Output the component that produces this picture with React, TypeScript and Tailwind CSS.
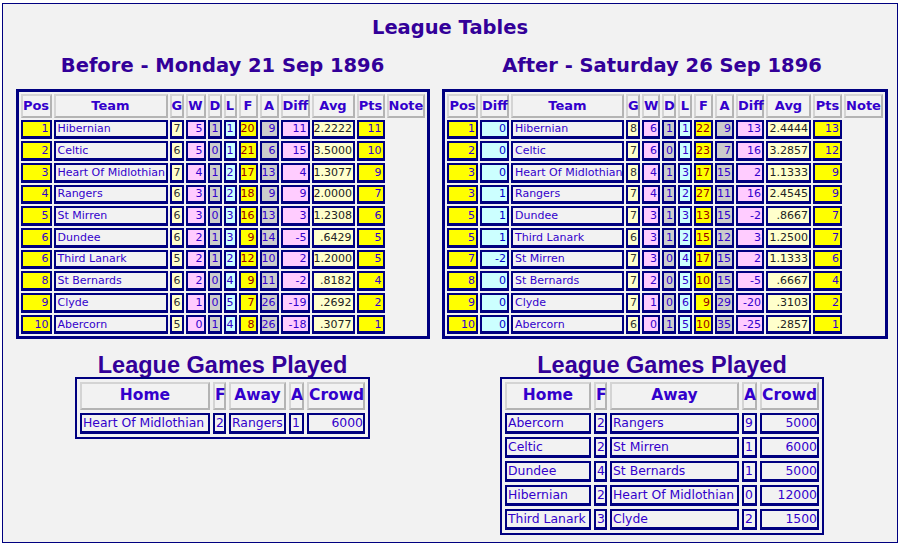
type Col = {
  key: string
  label: string
  w: string
  cell: string
}

const head =
  'h-[20px] p-0 border-2 border-[#d4d4d4] border-r-[#b4b4b4] border-b-[#b4b4b4] text-center text-[13px] font-bold text-[#3300cc]'
const box = 'border-2 border-b-[3px] border-[#000080] h-[19.7px] leading-[13px] whitespace-nowrap'
const num = 'text-right pl-0 pr-[1px]'

const beforeCols: Col[] = [
  { key: 'pos', label: 'Pos', w: 'w-[31px]', cell: `bg-[#ffff00] text-[#3300cc] ${num}` },
  { key: 'team', label: 'Team', w: 'w-[114px]', cell: 'bg-[#f2f2f2] text-[#3300cc] text-left px-[2px]' },
  { key: 'g', label: 'G', w: 'w-[14px]', cell: `bg-[#ffffcc] text-[#333333] ${num}` },
  { key: 'w', label: 'W', w: 'w-[20px]', cell: `bg-[#ffccff] text-[#3300cc] ${num}` },
  { key: 'd', label: 'D', w: 'w-[14px]', cell: `bg-[#cccccc] text-[#3300cc] ${num}` },
  { key: 'l', label: 'L', w: 'w-[13px]', cell: `bg-[#ccffff] text-[#3300cc] ${num}` },
  { key: 'f', label: 'F', w: 'w-[19px]', cell: `bg-[#ffff00] text-[#990000] ${num}` },
  { key: 'a', label: 'A', w: 'w-[19px]', cell: `bg-[#cccccc] text-[#3300cc] ${num}` },
  { key: 'diff', label: 'Diff', w: 'w-[29px]', cell: `bg-[#ffccff] text-[#3300cc] ${num}` },
  { key: 'avg', label: 'Avg', w: 'w-[43px]', cell: `bg-[#ffffcc] text-[#222222] ${num}` },
  { key: 'pts', label: 'Pts', w: 'w-[28px]', cell: `bg-[#ffff00] text-[#3300cc] ${num}` },
  { key: 'note', label: 'Note', w: 'w-[38px]', cell: '' },
]

const afterCols: Col[] = [
  { key: 'pos', label: 'Pos', w: 'w-[31px]', cell: `bg-[#ffff00] text-[#3300cc] ${num}` },
  { key: 'move', label: 'Diff', w: 'w-[29px]', cell: `bg-[#ccffff] text-[#0000cc] ${num}` },
  { key: 'team', label: 'Team', w: 'w-[113px]', cell: 'bg-[#f2f2f2] text-[#3300cc] text-left px-[2px]' },
  { key: 'g', label: 'G', w: 'w-[14px]', cell: `bg-[#ffffcc] text-[#333333] ${num}` },
  { key: 'w', label: 'W', w: 'w-[18px]', cell: `bg-[#ffccff] text-[#3300cc] ${num}` },
  { key: 'd', label: 'D', w: 'w-[14px]', cell: `bg-[#cccccc] text-[#3300cc] ${num}` },
  { key: 'l', label: 'L', w: 'w-[14px]', cell: `bg-[#ccffff] text-[#3300cc] ${num}` },
  { key: 'f', label: 'F', w: 'w-[19px]', cell: `bg-[#ffff00] text-[#990000] ${num}` },
  { key: 'a', label: 'A', w: 'w-[19px]', cell: `bg-[#cccccc] text-[#3300cc] ${num}` },
  { key: 'diff', label: 'Diff', w: 'w-[28px]', cell: `bg-[#ffccff] text-[#3300cc] ${num}` },
  { key: 'avg', label: 'Avg', w: 'w-[45px]', cell: `bg-[#ffffcc] text-[#222222] ${num}` },
  { key: 'pts', label: 'Pts', w: 'w-[29px]', cell: `bg-[#ffff00] text-[#3300cc] ${num}` },
  { key: 'note', label: 'Note', w: 'w-[39px]', cell: '' },
]

const toRow = (s: string, keys: string[]) => {
  const parts = s.split('|')
  const r: Record<string, string> = {}
  keys.forEach((k, i) => (r[k] = parts[i] ?? ''))
  return r
}

const beforeKeys = ['pos', 'team', 'g', 'w', 'd', 'l', 'f', 'a', 'diff', 'avg', 'pts']
const afterKeys = ['pos', 'move', 'team', 'g', 'w', 'd', 'l', 'f', 'a', 'diff', 'avg', 'pts']

const before = [
  '1|Hibernian|7|5|1|1|20|9|11|2.2222|11',
  '2|Celtic|6|5|0|1|21|6|15|3.5000|10',
  '3|Heart Of Midlothian|7|4|1|2|17|13|4|1.3077|9',
  '4|Rangers|6|3|1|2|18|9|9|2.0000|7',
  '5|St Mirren|6|3|0|3|16|13|3|1.2308|6',
  '6|Dundee|6|2|1|3|9|14|-5|.6429|5',
  '6|Third Lanark|5|2|1|2|12|10|2|1.2000|5',
  '8|St Bernards|6|2|0|4|9|11|-2|.8182|4',
  '9|Clyde|6|1|0|5|7|26|-19|.2692|2',
  '10|Abercorn|5|0|1|4|8|26|-18|.3077|1',
].map((s) => toRow(s, beforeKeys))

const after = [
  '1|0|Hibernian|8|6|1|1|22|9|13|2.4444|13',
  '2|0|Celtic|7|6|0|1|23|7|16|3.2857|12',
  '3|0|Heart Of Midlothian|8|4|1|3|17|15|2|1.1333|9',
  '3|1|Rangers|7|4|1|2|27|11|16|2.4545|9',
  '5|1|Dundee|7|3|1|3|13|15|-2|.8667|7',
  '5|1|Third Lanark|6|3|1|2|15|12|3|1.2500|7',
  '7|-2|St Mirren|7|3|0|4|17|15|2|1.1333|6',
  '8|0|St Bernards|7|2|0|5|10|15|-5|.6667|4',
  '9|0|Clyde|7|1|0|6|9|29|-20|.3103|2',
  '10|0|Abercorn|6|0|1|5|10|35|-25|.2857|1',
].map((s) => toRow(s, afterKeys))

function LeagueTable({
  cols,
  rows,
  width,
}: {
  cols: Col[]
  rows: Record<string, string>[]
  width: string
}) {
  return (
    <table
      className={`${width} mx-auto table-fixed border-separate border-spacing-[2px] border-[3px] border-[#000080] text-[11px]`}
    >
      <thead>
        <tr>
          {cols.map((c) => (
            <th key={c.key} className={`${head} ${c.w}`}>
              {c.label}
            </th>
          ))}
        </tr>
      </thead>
      <tbody>
        {rows.map((r, i) => (
          <tr key={i}>
            {cols.map((c) =>
              c.key === 'note' ? (
                <td key={c.key} />
              ) : (
                <td key={c.key} className={`${box} ${c.cell}`}>
                  {r[c.key]}
                </td>
              ),
            )}
          </tr>
        ))}
      </tbody>
    </table>
  )
}

type Game = [string, string, string, string, string]

function GamesTable({
  games,
  widths,
  width,
}: {
  games: Game[]
  widths: string[]
  width: string
}) {
  const labels = ['Home', 'F', 'Away', 'A', 'Crowd']
  const gh =
    'h-[24px] p-0 border-2 border-[#d4d4d4] border-r-[#b4b4b4] border-b-[#b4b4b4] text-center text-[15.5px] font-bold text-[#3300cc] whitespace-nowrap'
  const gd =
    'h-[21px] border-2 border-b-[3px] border-[#000080] bg-[#f2f2f2] pl-[1px] pr-0 text-[12.4px] leading-[15px] text-[#3300cc] whitespace-nowrap'
  return (
    <table
      className={`${width} mx-auto table-fixed border-separate border-spacing-[3px] border-2 border-[#000080]`}
    >
      <thead>
        <tr>
          {labels.map((l, i) => (
            <th key={l} className={`${gh} ${widths[i]}`}>
              {l}
            </th>
          ))}
        </tr>
      </thead>
      <tbody>
        {games.map((g, i) => (
          <tr key={i}>
            {g.map((v, j) => (
              <td key={j} className={`${gd} ${j === 4 ? 'text-right' : 'text-left'}`}>
                {v}
              </td>
            ))}
          </tr>
        ))}
      </tbody>
    </table>
  )
}

const gamesBefore: Game[] = [['Heart Of Midlothian', '2', 'Rangers', '1', '6000']]

const gamesAfter: Game[] = [
  ['Abercorn', '2', 'Rangers', '9', '5000'],
  ['Celtic', '2', 'St Mirren', '1', '6000'],
  ['Dundee', '4', 'St Bernards', '1', '5000'],
  ['Hibernian', '2', 'Heart Of Midlothian', '0', '12000'],
  ['Third Lanark', '3', 'Clyde', '2', '1500'],
]

function Side({
  title,
  table,
  games,
}: {
  title: string
  table: React.ReactNode
  games: React.ReactNode
}) {
  return (
    <div className="flex flex-col">
      <h2 className="mt-[13px] text-center text-[19.5px] leading-[26px] font-bold text-[#330099]">
        {title}
      </h2>
      <div className="mt-[10px]">{table}</div>
      <h3 className="mt-[14px] text-center font-['Liberation_Sans',Arial,sans-serif] text-[23.5px] leading-[24px] font-bold text-[#330099]">
        League Games Played
      </h3>
      {games}
    </div>
  )
}

export default function App() {
  return (
    <div className="min-h-[545px] bg-white pt-[3px] pl-[2px] font-['DejaVu_Sans',Verdana,sans-serif]">
      <div className="h-[540px] w-[896px] border border-[#000080] bg-[#f2f2f2]">
        <h1 className="pt-[12px] text-center text-[19.5px] leading-[24px] font-bold text-[#330099]">
          League Tables
        </h1>
        <div className="grid grid-cols-[439px_440px]">
          <Side
            title="Before - Monday 21 Sep 1896"
            table={<LeagueTable cols={beforeCols} rows={before} width="w-[414px]" />}
            games={
              <GamesTable
                games={gamesBefore}
                width="w-[295px]"
                widths={['w-[130px]', 'w-[13px]', 'w-[57px]', 'w-[15px]', 'w-[58px]']}
              />
            }
          />
          <Side
            title="After - Saturday 26 Sep 1896"
            table={<LeagueTable cols={afterCols} rows={after} width="w-[446px]" />}
            games={
              <GamesTable
                games={gamesAfter}
                width="w-[324px]"
                widths={['w-[86px]', 'w-[13px]', 'w-[129px]', 'w-[15px]', 'w-[59px]']}
              />
            }
          />
        </div>
      </div>
    </div>
  )
}
